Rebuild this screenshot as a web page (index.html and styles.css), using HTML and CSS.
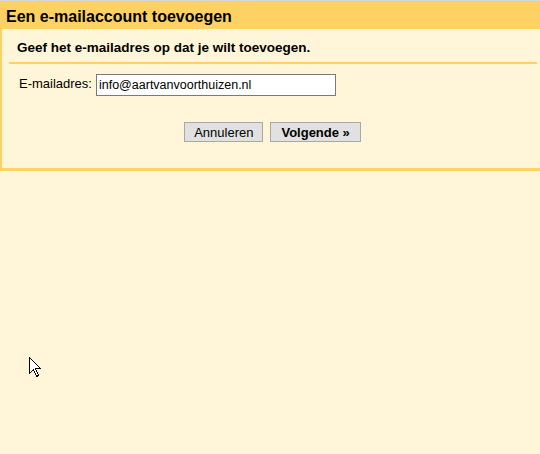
FILE: index.html
```html
<!DOCTYPE html>
<html lang="nl">
<head>
<meta charset="utf-8">
<title>Een e-mailaccount toevoegen</title>
<link rel="stylesheet" href="styles.css">
</head>
<body>
<div class="topline"></div>
<header class="hdr">Een e-mailaccount toevoegen</header>
<section class="panel">
  <div class="sub">Geef het e-mailadres op dat je wilt toevoegen.</div>
  <div class="sep"></div>
  <div class="row">
    <label class="lbl" for="email">E-mailadres:</label>
    <input class="inp" id="email" type="text" value="info@aartvanvoorthuizen.nl">
  </div>
  <div class="actions">
    <button class="btn" type="button">Annuleren</button>
    <button class="btn btn-bold" type="button">Volgende »</button>
  </div>
</section>
<svg class="cursor" width="14" height="21" viewBox="0 0 14 21">
  <path d="M0.5 0.5 L0.5 16.5 L4.5 12.5 L7.5 19.5 L9.5 18.5 L6.5 11.5 L11.5 11.5 Z" fill="#fff" stroke="#000" stroke-width="1" shape-rendering="crispEdges"/>
</svg>
</body>
</html>
```
FILE: styles.css
```css
html, body {
  margin: 0;
  padding: 0;
}
body {
  background: #fff6d9;
  font-family: Arial, "Liberation Sans", sans-serif;
  color: #000;
  width: 540px;
  height: 454px;
  position: relative;
  overflow: hidden;
}
.topline {
  height: 1px;
  background: #d8d8d8;
}
.hdr {
  height: 28px;
  background: #fdd163;
  font-weight: bold;
  font-size: 16px;
  line-height: 31px;
  padding-left: 6px;
  box-sizing: border-box;
}
.panel {
  border-left: 2px solid #fdd163;
  border-bottom: 3px solid #fdd163;
  height: 142px;
  box-sizing: border-box;
  display: flex;
  flex-direction: column;
}
.sub {
  font-weight: bold;
  font-size: 13.5px;
  line-height: 15px;
  padding: 11px 0 0 15px;
}
.sep {
  height: 2px;
  background: #fdd163;
  margin: 7px 3px 0 7px;
}
.row {
  display: flex;
  align-items: center;
  margin-top: 10px;
  padding-left: 17px;
}
.lbl {
  font-size: 13px;
  margin-right: 4px;
  position: relative;
  top: -2px;
}
.inp {
  width: 240px;
  height: 22px;
  box-sizing: border-box;
  border: 1px solid #7a7a7a;
  padding: 0 2px;
  font-family: Arial, "Liberation Sans", sans-serif;
  font-size: 12.5px;
  background: #fff;
  color: #000;
  margin: 0;
}
.actions {
  display: flex;
  justify-content: center;
  gap: 7px;
  margin-top: 26px;
  padding-left: 3px;
}
.btn {
  height: 20px;
  box-sizing: border-box;
  border: 1px solid #a8a8a8;
  background: #e1e1e1;
  font-family: Arial, "Liberation Sans", sans-serif;
  font-size: 13px;
  color: #000;
  padding: 0 9px;
  margin: 0;
}
.btn-bold {
  font-weight: bold;
  padding: 0 10px;
}
.cursor {
  position: absolute;
  left: 29px;
  top: 357px;
}
```
